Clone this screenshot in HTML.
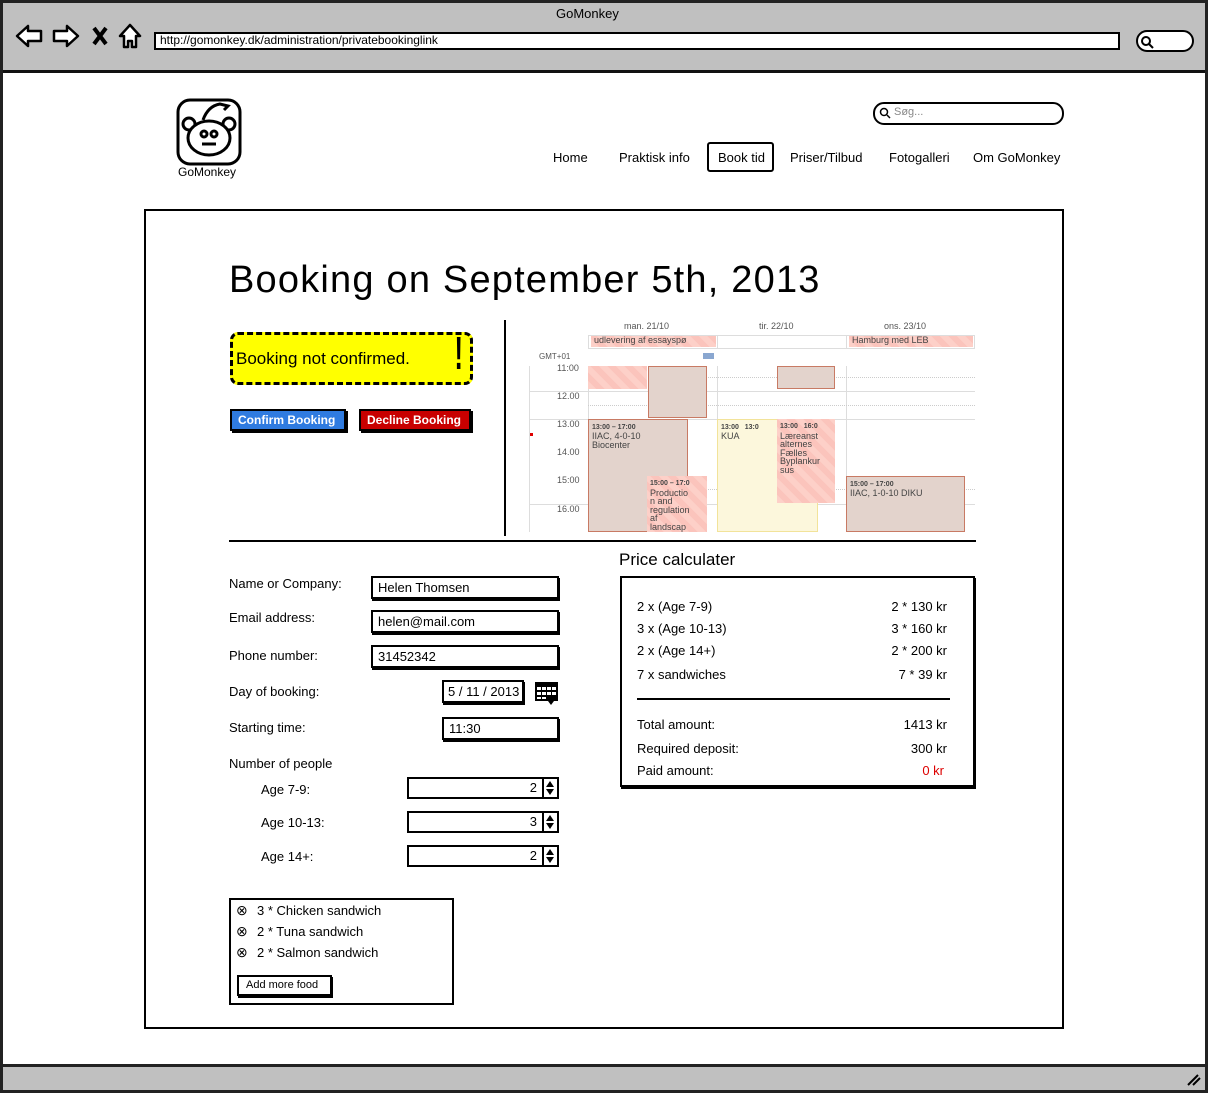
<!DOCTYPE html>
<html><head><meta charset="utf-8"><style>
*{box-sizing:border-box;margin:0;padding:0}
body{width:1208px;height:1093px;position:relative;background:#fff;font-family:"Liberation Sans",sans-serif;font-size:13px;color:#000;overflow:hidden}
.a{position:absolute}
.box{position:absolute;border:2px solid #000;background:#fff;box-shadow:1px 2px 0 #000}
.t{position:absolute;white-space:nowrap}
.cal{font-size:9px;color:#555}
.ev{position:absolute;font-size:9px;color:#444;line-height:9px;padding:2px 3px;overflow:hidden}
.br{background:#e3d3cc;border:1px solid #c87a64}
.pk{background:repeating-linear-gradient(45deg,#fdd0c8 0 6px,#fbc4bc 6px 12px)}
.hl{position:absolute;height:1px;background:#ddd}
.dl{position:absolute;height:0;border-top:1px dotted #ccc}
.spin{position:absolute;right:0;top:0;width:15px;height:100%;border-left:2px solid #000}
</style></head><body>
<div class="a" style="left:0;top:0;width:1208px;height:1093px;border:3px solid #222"></div>
<div class="a" style="left:3px;top:3px;width:1202px;height:70px;background:#c0c0c0;border-bottom:3px solid #111"></div>
<div class="t" style="left:556px;top:6px;font-size:13px">GoMonkey</div>
<svg class="a" style="left:14px;top:22px" width="130" height="28" viewBox="0 0 130 28" fill="#fff" stroke="#000" stroke-width="2.5" stroke-linejoin="round">
<path d="M3 14 L14 4 L14 9 L27 9 L27 19 L14 19 L14 24 Z"/>
<path d="M64 14 L53 4 L53 9 L40 9 L40 19 L53 19 L53 24 Z"/>
<path d="M80 6 L92 22 M92 6 L80 22" stroke-width="4"/>
<path d="M106 14 L116 3 L126 14 L122 14 L122 25 L118 25 L118 19 L114 19 L114 25 L110 25 L110 14 Z"/>
</svg>
<div class="box" style="left:154px;top:32px;width:966px;height:18px;box-shadow:none"></div>
<div class="t" style="left:160px;top:33px;font-size:12px">http://gomonkey.dk/administration/privatebookinglink</div>
<div class="a" style="left:1136px;top:30px;width:58px;height:22px;border:2px solid #000;border-radius:11px;background:#fff"></div>
<svg class="a" style="left:1140px;top:35px" width="14" height="14"><circle cx="6" cy="6" r="4" fill="none" stroke="#000" stroke-width="2"/><path d="M9 9 L13 13" stroke="#000" stroke-width="2"/></svg>
<div class="a" style="left:3px;top:1064px;width:1202px;height:26px;background:#c0c0c0;border-top:3px solid #222"></div>
<svg class="a" style="left:1186px;top:1073px" width="16" height="14"><path d="M2 12 L12 2 M7 12 L14 5" stroke="#000" stroke-width="2"/></svg>

<svg class="a" style="left:176px;top:98px" width="68" height="70" viewBox="0 0 68 70">
<rect x="2" y="2" width="62" height="64" rx="12" fill="#fff" stroke="#000" stroke-width="3"/>
<path d="M27 22 Q32 8 44 6 L52 8 L48 12" fill="none" stroke="#000" stroke-width="3"/>
<circle cx="13" cy="26" r="6" fill="#fff" stroke="#000" stroke-width="3"/>
<circle cx="53" cy="26" r="6" fill="#fff" stroke="#000" stroke-width="3"/>
<ellipse cx="33" cy="40" rx="21" ry="17" fill="#fff" stroke="#000" stroke-width="3"/>
<circle cx="28" cy="36" r="3" fill="none" stroke="#000" stroke-width="3"/>
<circle cx="38" cy="36" r="3" fill="none" stroke="#000" stroke-width="3"/>
<path d="M26 46 L40 46" stroke="#000" stroke-width="3"/>
</svg>
<div class="t" style="left:178px;top:165px;font-size:12px">GoMonkey</div>

<div class="a" style="left:873px;top:102px;width:191px;height:23px;border:2px solid #000;border-radius:11px"></div>
<svg class="a" style="left:879px;top:107px" width="12" height="12"><circle cx="5" cy="5" r="3.5" fill="none" stroke="#000" stroke-width="1.5"/><path d="M8 8 L11 11" stroke="#000" stroke-width="1.5"/></svg>
<div class="t" style="left:894px;top:106px;font-size:11px;color:#888">Søg...</div>

<div class="t" style="left:553px;top:150px">Home</div>
<div class="t" style="left:619px;top:150px">Praktisk info</div>
<div class="a" style="left:707px;top:142px;width:67px;height:30px;border:2px solid #000;border-radius:3px"></div>
<div class="t" style="left:718px;top:150px">Book tid</div>
<div class="t" style="left:790px;top:150px">Priser/Tilbud</div>
<div class="t" style="left:889px;top:150px">Fotogalleri</div>
<div class="t" style="left:973px;top:150px">Om GoMonkey</div>

<div class="a" style="left:144px;top:209px;width:920px;height:820px;border:2px solid #000"></div>
<div class="t" style="left:229px;top:259px;font-size:38px;letter-spacing:1.2px">Booking on September 5th, 2013</div>

<div class="a" style="left:230px;top:332px;width:243px;height:53px;background:#ff0;border:3px dashed #000;border-radius:8px"></div>
<div class="t" style="left:236px;top:349px;font-size:17px">Booking not confirmed.</div>
<div class="t" style="left:451px;top:326px;font-size:46px;font-weight:bold;transform:scaleX(0.55)">!</div>
<div class="a" style="left:230px;top:409px;width:116px;height:22px;background:#2f7be0;border:2px solid #000;box-shadow:2px 2px 0 #000"></div>
<div class="t" style="left:238px;top:413px;color:#fff;font-weight:bold;font-size:12px">Confirm Booking</div>
<div class="a" style="left:359px;top:409px;width:112px;height:22px;background:#c80000;border:2px solid #000;box-shadow:2px 2px 0 #000"></div>
<div class="t" style="left:367px;top:413px;color:#fff;font-weight:bold;font-size:12px">Decline Booking</div>

<div class="a" style="left:504px;top:320px;width:2px;height:216px;background:#000"></div>
<div class="t cal" style="left:624px;top:321px">man. 21/10</div>
<div class="t cal" style="left:759px;top:321px">tir. 22/10</div>
<div class="t cal" style="left:884px;top:321px">ons. 23/10</div>
<div class="a" style="left:588px;top:335px;width:387px;height:14px;border:1px solid #ddd"></div>
<div class="a" style="left:717px;top:335px;width:1px;height:14px;background:#ddd"></div>
<div class="a" style="left:846px;top:335px;width:1px;height:14px;background:#ddd"></div>
<div class="ev pk" style="left:591px;top:336px;width:125px;height:11px;padding:0 3px">udlevering af essayspø</div>
<div class="ev pk" style="left:849px;top:336px;width:124px;height:11px;padding:0 3px">Hamburg med LEB</div>
<div class="t cal" style="left:539px;top:352px;font-size:8px">GMT+01</div>
<div class="a" style="left:703px;top:353px;width:11px;height:6px;background:#8aa7d0"></div>
<div class="a" style="left:529px;top:366px;width:1px;height:166px;background:#ddd"></div>
<div class="a" style="left:588px;top:366px;width:1px;height:166px;background:#ddd"></div>
<div class="a" style="left:717px;top:366px;width:1px;height:166px;background:#ddd"></div>
<div class="a" style="left:846px;top:366px;width:1px;height:166px;background:#ddd"></div>
<div class="hl" style="left:529px;top:391px;width:446px"></div>
<div class="hl" style="left:529px;top:419px;width:446px"></div>
<div class="hl" style="left:529px;top:504px;width:446px"></div>
<div class="dl" style="left:588px;top:377px;width:387px"></div>
<div class="dl" style="left:588px;top:405px;width:387px"></div>
<div class="dl" style="left:588px;top:489px;width:387px"></div>
<div class="t cal" style="left:557px;top:363px">11:00</div>
<div class="t cal" style="left:557px;top:391px">12.00</div>
<div class="t cal" style="left:557px;top:419px">13.00</div>
<div class="t cal" style="left:557px;top:447px">14.00</div>
<div class="t cal" style="left:557px;top:475px">15:00</div>
<div class="t cal" style="left:557px;top:504px">16.00</div>
<div class="a" style="left:530px;top:433px;width:3px;height:3px;background:#d00"></div>
<div class="ev pk" style="left:588px;top:366px;width:59px;height:23px"></div>
<div class="ev br" style="left:648px;top:366px;width:59px;height:52px"></div>
<div class="ev br" style="left:588px;top:419px;width:100px;height:113px"><b style="font-size:7px">13:00 – 17:00</b><br>IIAC, 4-0-10<br>Biocenter</div>
<div class="ev pk" style="left:647px;top:476px;width:60px;height:56px;line-height:8.5px"><b style="font-size:7px">15:00 – 17:0</b><br>Productio<br>n and<br>regulation<br>af<br>landscap</div>
<div class="ev" style="left:717px;top:419px;width:101px;height:113px;background:#fcf7dc;border:1px solid #f2e39a"><b style="font-size:7px">13:00 &nbsp; 13:0</b><br>KUA</div>
<div class="ev br" style="left:777px;top:366px;width:58px;height:23px"></div>
<div class="ev pk" style="left:777px;top:419px;width:58px;height:84px;line-height:8.5px"><b style="font-size:7px">13:00 &nbsp; 16:0</b><br>Læreanst<br>alternes<br>Fælles<br>Byplankur<br>sus</div>
<div class="ev br" style="left:846px;top:476px;width:119px;height:56px"><b style="font-size:7px">15:00 – 17:00</b><br>IIAC, 1-0-10 DIKU</div>
<div class="a" style="left:229px;top:540px;width:747px;height:2px;background:#000"></div>

<div class="t" style="left:229px;top:576px">Name or Company:</div>
<div class="box" style="left:371px;top:576px;width:188px;height:23px"></div>
<div class="t" style="left:378px;top:580px">Helen Thomsen</div>
<div class="t" style="left:229px;top:610px">Email address:</div>
<div class="box" style="left:371px;top:610px;width:188px;height:23px"></div>
<div class="t" style="left:378px;top:614px">helen@mail.com</div>
<div class="t" style="left:229px;top:648px">Phone number:</div>
<div class="box" style="left:371px;top:645px;width:188px;height:23px"></div>
<div class="t" style="left:378px;top:649px">31452342</div>
<div class="t" style="left:229px;top:684px">Day of booking:</div>
<div class="box" style="left:442px;top:680px;width:82px;height:23px"></div>
<div class="t" style="left:448px;top:684px">5 / 11 / 2013</div>
<svg class="a" style="left:534px;top:680px" width="26" height="26" viewBox="0 0 26 26"><rect x="1" y="2" width="23" height="19" fill="#000"/><g fill="#fff"><rect x="3" y="7" width="4" height="3"/><rect x="8" y="7" width="4" height="3"/><rect x="13" y="7" width="4" height="3"/><rect x="18" y="7" width="4" height="3"/><rect x="3" y="12" width="4" height="3"/><rect x="8" y="12" width="4" height="3"/><rect x="13" y="12" width="4" height="3"/><rect x="18" y="12" width="4" height="3"/><rect x="3" y="17" width="4" height="2"/><rect x="8" y="17" width="4" height="2"/></g><path d="M14 21 L20 21 L17 25 Z" fill="#000"/></svg>
<div class="t" style="left:229px;top:720px">Starting time:</div>
<div class="box" style="left:442px;top:717px;width:117px;height:23px"></div>
<div class="t" style="left:449px;top:721px">11:30</div>
<div class="t" style="left:229px;top:756px">Number of people</div>
<div class="t" style="left:261px;top:782px">Age 7-9:</div>
<div class="t" style="left:261px;top:815px">Age 10-13:</div>
<div class="t" style="left:261px;top:849px">Age 14+:</div>
<div class="box" style="left:407px;top:777px;width:152px;height:22px;box-shadow:none"><span class="t" style="right:20px;top:1px">2</span><div class="spin"><svg width="12" height="18"><path d="M2 8 L6 2 L10 8 Z M2 10 L6 16 L10 10 Z" fill="#000"/></svg></div></div>
<div class="box" style="left:407px;top:811px;width:152px;height:22px;box-shadow:none"><span class="t" style="right:20px;top:1px">3</span><div class="spin"><svg width="12" height="18"><path d="M2 8 L6 2 L10 8 Z M2 10 L6 16 L10 10 Z" fill="#000"/></svg></div></div>
<div class="box" style="left:407px;top:845px;width:152px;height:22px;box-shadow:none"><span class="t" style="right:20px;top:1px">2</span><div class="spin"><svg width="12" height="18"><path d="M2 8 L6 2 L10 8 Z M2 10 L6 16 L10 10 Z" fill="#000"/></svg></div></div>

<div class="box" style="left:229px;top:898px;width:225px;height:107px;box-shadow:none"></div>
<div class="t" style="left:236px;top:902px;font-size:14px">⊗</div><div class="t" style="left:257px;top:903px">3 * Chicken sandwich</div>
<div class="t" style="left:236px;top:923px;font-size:14px">⊗</div><div class="t" style="left:257px;top:924px">2 * Tuna sandwich</div>
<div class="t" style="left:236px;top:944px;font-size:14px">⊗</div><div class="t" style="left:257px;top:945px">2 * Salmon sandwich</div>
<div class="box" style="left:237px;top:975px;width:95px;height:21px"></div>
<div class="t" style="left:246px;top:979px;font-size:11px">Add more food</div>

<div class="t" style="left:619px;top:550px;font-size:17px">Price calculater</div>
<div class="box" style="left:620px;top:576px;width:355px;height:211px"></div>
<div class="t" style="left:637px;top:599px">2 x (Age 7-9)</div><div class="t" style="right:261px;top:599px">2 * 130 kr</div>
<div class="t" style="left:637px;top:621px">3 x (Age 10-13)</div><div class="t" style="right:261px;top:621px">3 * 160 kr</div>
<div class="t" style="left:637px;top:643px">2 x (Age 14+)</div><div class="t" style="right:261px;top:643px">2 * 200 kr</div>
<div class="t" style="left:637px;top:667px">7 x sandwiches</div><div class="t" style="right:261px;top:667px">7 * 39 kr</div>
<div class="a" style="left:637px;top:698px;width:313px;height:2px;background:#000"></div>
<div class="t" style="left:637px;top:717px">Total amount:</div><div class="t" style="right:261px;top:717px">1413 kr</div>
<div class="t" style="left:637px;top:741px">Required deposit:</div><div class="t" style="right:261px;top:741px">300 kr</div>
<div class="t" style="left:637px;top:763px">Paid amount:</div><div class="t" style="right:264px;top:763px;color:#d00">0 kr</div>
</body></html>
